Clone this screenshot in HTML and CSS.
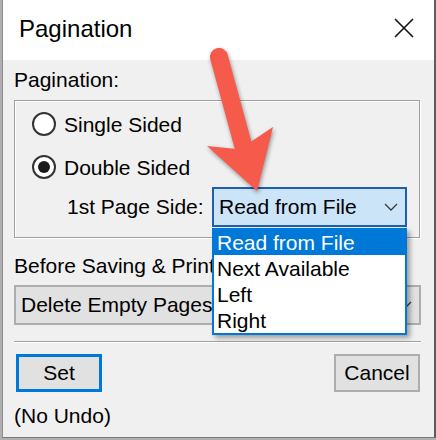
FILE: index.html
```html
<!DOCTYPE html>
<html>
<head>
<meta charset="utf-8">
<link rel="stylesheet" href="styles.css">
</head>
<body>
<div class="window">
  <div class="titlebar">
    <span class="title">Pagination</span>
    <svg class="close" width="20" height="20" viewBox="0 0 20 20"><path d="M1 1 L19 19 M19 1 L1 19" stroke="#111" stroke-width="1.6" fill="none"/></svg>
  </div>
  <div class="content">
    <div class="label">Pagination:</div>
    <div class="group">
      <div class="row radio-row"><span class="radio"></span><span>Single Sided</span></div>
      <div class="row radio-row second"><span class="radio checked"></span><span>Double Sided</span></div>
      <div class="row side-row">
        <span class="side-label">1st Page Side:</span>
        <div class="combo focused"><span>Read from File</span><svg class="chev" width="14" height="8" viewBox="0 0 14 8"><path d="M1 1 L7 7 L13 1" stroke="#3a3a3a" stroke-width="1.3" fill="none"/></svg></div>
      </div>
    </div>
    <div class="label before">Before Saving &amp; Printing:</div>
    <div class="combo plain"><span class="plain-text">Delete Empty Pages</span><svg class="chev" width="14" height="8" viewBox="0 0 14 8"><path d="M1 1 L7 7 L13 1" stroke="#3a3a3a" stroke-width="1.3" fill="none"/></svg></div>
    <div class="sep"></div>
    <div class="buttons">
      <button class="btn default">Set</button>
      <button class="btn">Cancel</button>
    </div>
    <div class="note">(No Undo)</div>
  </div>
  <ul class="dropdown">
    <li class="sel">Read from File</li>
    <li>Next Available</li>
    <li>Left</li>
    <li>Right</li>
  </ul>
  <svg class="arrow" width="436" height="440" viewBox="0 0 436 440">
    <line x1="219" y1="57" x2="243" y2="145" stroke="#f65a4b" stroke-width="18" stroke-linecap="round"/>
    <path d="M207 146 L236 149 L252 141 L273 127 L257 191 Z" fill="#f65a4b"/>
  </svg>
</div>
</body>
</html>
```
FILE: styles.css
```css
html, body {
  margin: 0;
  padding: 0;
}
body {
  background: #b0b0b0;
  width: 436px;
  height: 440px;
  overflow: hidden;
  font-family: "Liberation Sans", Arial, sans-serif;
  font-size: 21px;
  color: #000;
}
.window {
  position: relative;
  margin-left: 2px;
  width: 431px;
  height: 437px;
  border-left: 1px solid #8c8c8c;
  border-right: 2px solid #5c5c5c;
  border-bottom: 1px solid #777;
  background: #f0f0f0;
}
.titlebar {
  display: flex;
  align-items: flex-start;
  height: 60px;
  box-sizing: border-box;
  padding: 15px 20px 0 16px;
  background: #fff;
}
.title {
  font-size: 24px;
  line-height: 28px;
}
.close {
  margin-left: auto;
  margin-top: 3px;
}
.content {
  padding: 8px 13px 0 11px;
  line-height: 24px;
}
.group {
  margin-top: 8px;
  margin-right: 1px;
  border: 1px solid #a0a0a0;
  box-shadow: inset 1px 1px 0 #fff, 1px 1px 0 #fff;
  padding: 12px 12px 10px 17px;
}
.row {
  display: flex;
  align-items: center;
}
.radio-row {
  height: 24px;
  gap: 8px;
}
.radio-row.second {
  margin-top: 19px;
}
.radio {
  width: 24px;
  height: 24px;
  box-sizing: border-box;
  border: 2px solid #333;
  border-radius: 50%;
  background: #fff;
  display: flex;
  align-items: center;
  justify-content: center;
  margin-bottom: 3px;
}
.radio.checked::after {
  content: "";
  width: 12px;
  height: 12px;
  border-radius: 50%;
  background: #1b1b1b;
}
.side-row {
  margin-top: 7px;
  height: 40px;
}
.side-label {
  padding-left: 35px;
}
.combo {
  display: flex;
  align-items: center;
  box-sizing: border-box;
  height: 40px;
}
.combo .chev {
  margin-left: auto;
  flex: none;
}
.combo.focused {
  margin-left: auto;
  width: 195px;
  border: 2px solid #1b5fae;
  background: #cce4f7;
  padding: 0 7px 0 5px;
}
.before {
  margin-top: 16px;
  width: 198px;
  overflow: hidden;
  white-space: nowrap;
}
.combo.plain {
  margin-top: 7px;
  width: 407px;
  border: 2px solid #adadad;
  background: #e1e1e1;
  padding: 0 7px 0 5px;
}
.plain-text {
  width: 191px;
  overflow: hidden;
  white-space: nowrap;
}
.sep {
  margin-top: 16px;
  height: 1px;
  background: #a0a0a0;
  border-bottom: 1px solid #fff;
}
.buttons {
  display: flex;
  justify-content: space-between;
  margin-top: 11px;
  padding: 0 1px 0 2px;
}
.btn {
  font: inherit;
  width: 86px;
  height: 38px;
  box-sizing: border-box;
  background: #e1e1e1;
  border: 2px solid #adadad;
  padding: 0;
  line-height: 24px;
  color: #000;
}
.btn.default {
  border: 3px solid #0078d7;
}
.note {
  margin-top: 12px;
}
.dropdown {
  position: absolute;
  left: 209px;
  top: 228px;
  width: 195px;
  box-sizing: border-box;
  margin: 0;
  padding: 0;
  list-style: none;
  border: 2px solid #0078d7;
  border-top-width: 1px;
  background: #fff;
  box-shadow: 3px 3px 5px rgba(0, 0, 0, 0.35);
}
.dropdown li {
  height: 26px;
  line-height: 28px;
  padding-left: 3px;
}
.dropdown li.sel {
  background: #0078d7;
  color: #fff;
}
.arrow {
  position: absolute;
  left: -3px;
  top: 0;
  pointer-events: none;
  filter: drop-shadow(1px 2px 2px rgba(0, 0, 0, 0.4));
}
```
